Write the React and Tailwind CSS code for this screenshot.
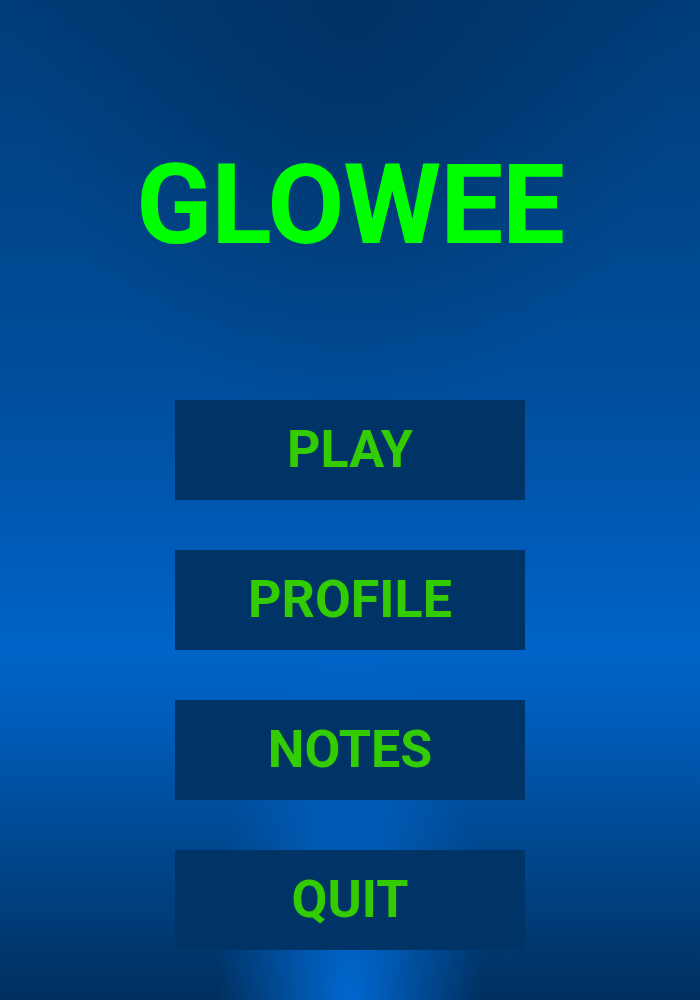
import React from 'react';

const MENU_ITEMS = ['PLAY', 'PROFILE', 'NOTES', 'QUIT'];

export default function App() {
  return (
    <div className="min-h-screen w-full flex flex-col items-center font-['Comic_Sans_MS','Roboto',sans-serif] bg-[radial-gradient(ellipse_19%_36%_at_50%_100%,rgba(0,104,208,1),rgba(0,104,208,0)),radial-gradient(ellipse_48%_42%_at_50%_0%,rgba(0,48,96,0.85),rgba(0,48,96,0)),linear-gradient(to_bottom,#003c78_0%,#004f9e_40%,#005bb8_55%,#0064c8_65%,#005cba_72%,#004c98_82%,#002f5e_100%)]">
      {/* Title */}
      <h1 className="mt-[149px] text-[112px] leading-none font-bold tracking-[-0.01em] text-[#00ff00]">
        GLOWEE
      </h1>

      {/* Menu */}
      <div className="mt-[139px] flex flex-col gap-[50px]">
        {MENU_ITEMS.map((label) => (
          <button
            key={label}
            className="w-[350px] h-[100px] flex items-center justify-center bg-[#003366] text-[#33cc00] text-[52px] leading-none font-bold"
          >
            {label}
          </button>
        ))}
      </div>
    </div>
  );
}
